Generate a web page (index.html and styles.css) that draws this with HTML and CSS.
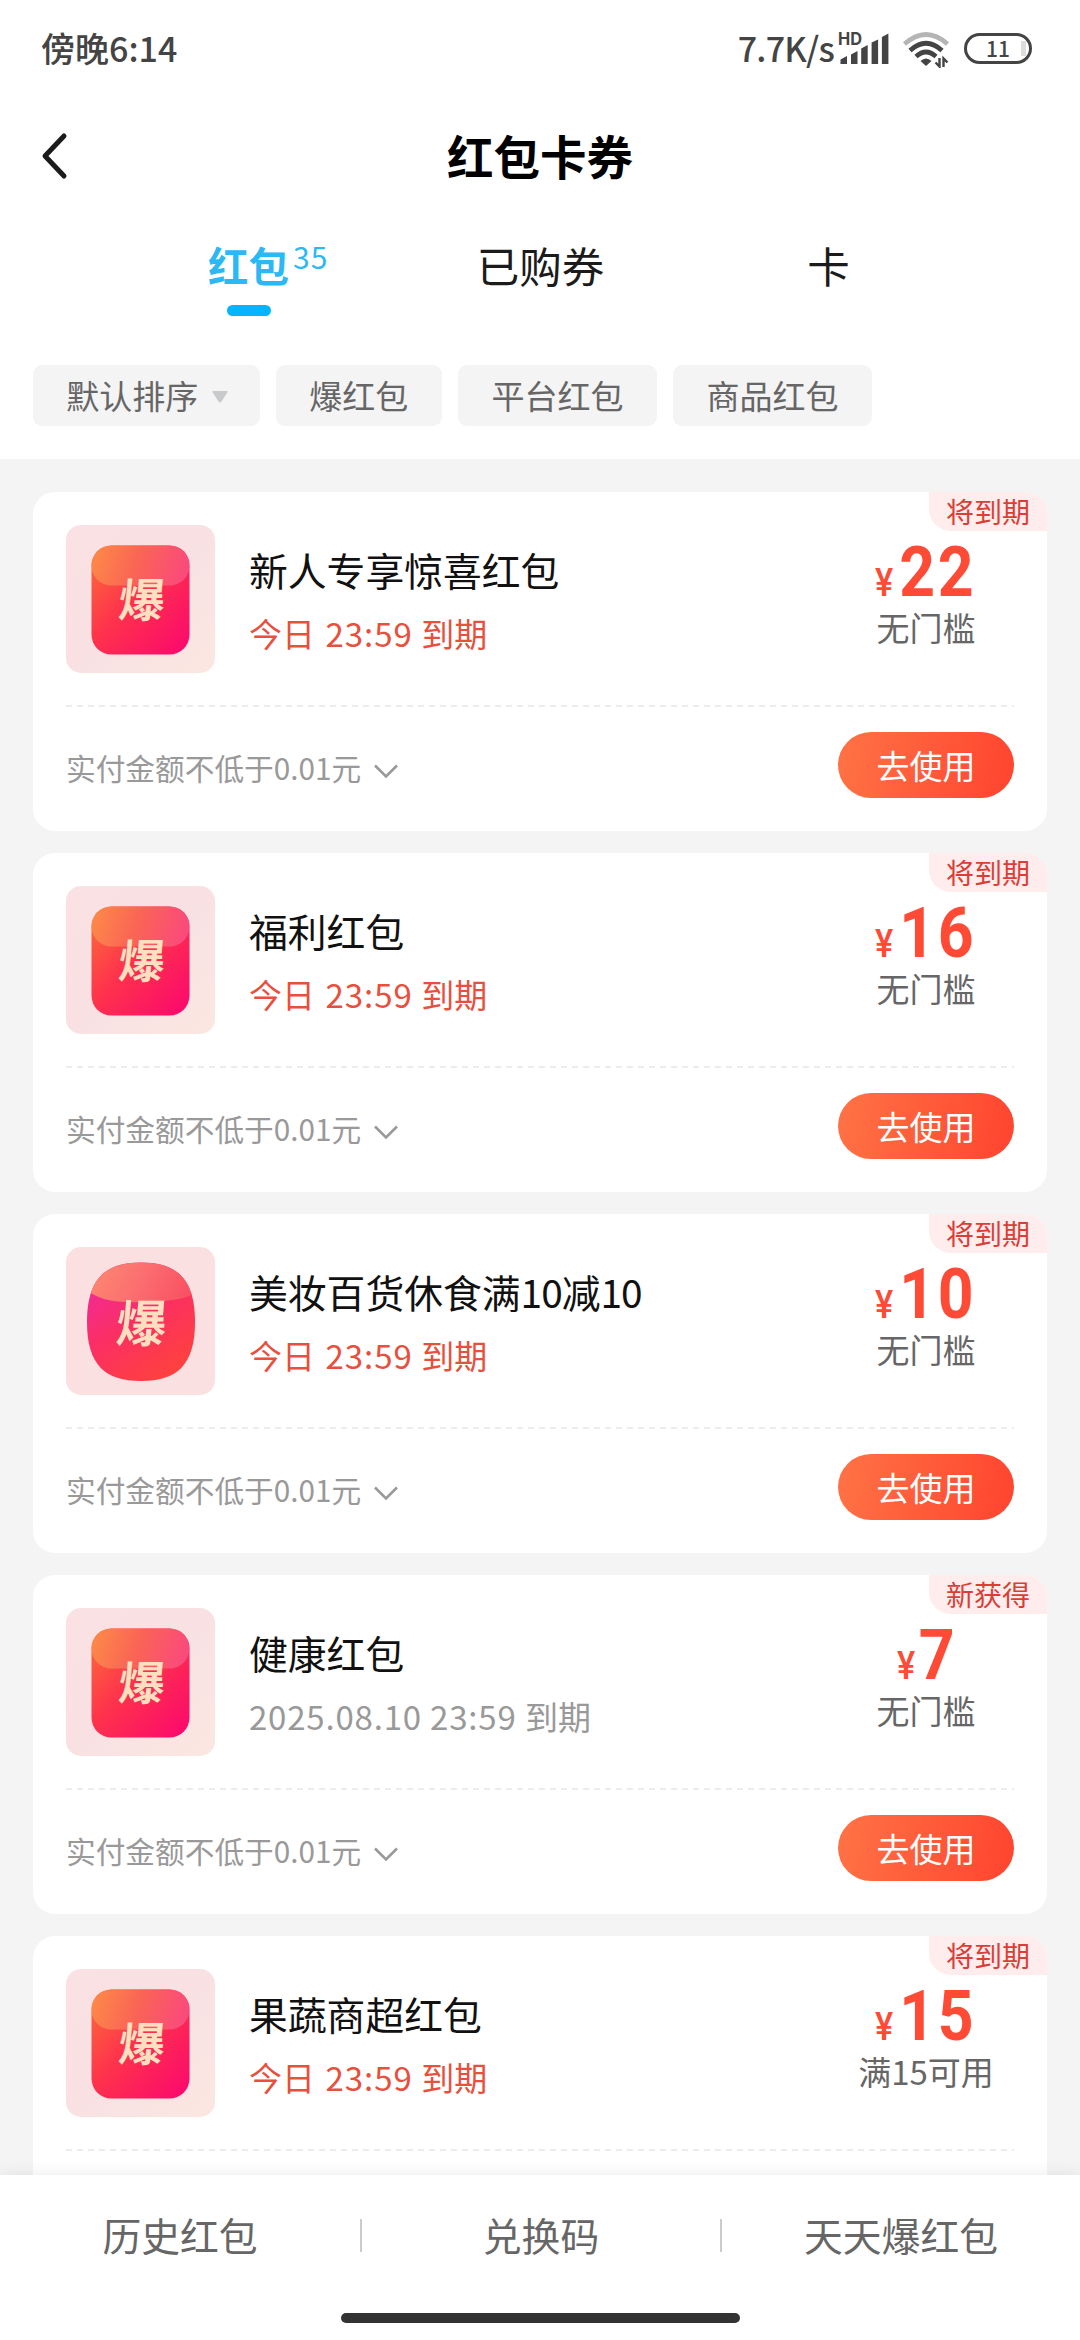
FILE: index.html
```html
<!DOCTYPE html>
<html lang="zh-CN">
<head>
<meta charset="utf-8">
<title>红包卡券</title>
<link rel="stylesheet" href="styles.css">
</head>
<body>
<svg width="0" height="0" class="defs">
  <defs>
    <linearGradient id="g-base" x1="0" y1="0.1" x2="0.9" y2="1"><stop offset="0" stop-color="#fc6a3c"/><stop offset="0.45" stop-color="#fe324c"/><stop offset="1" stop-color="#fb0a6c"/></linearGradient>
    <linearGradient id="g-gloss" x1="0" y1="0.4" x2="1" y2="0.6"><stop offset="0" stop-color="#fd8b48"/><stop offset="0.5" stop-color="#fa6455"/><stop offset="1" stop-color="#fa4a7c"/></linearGradient>
    <linearGradient id="g-back" x1="0" y1="0" x2="1" y2="1"><stop offset="0" stop-color="#f9e1e4"/><stop offset="0.5" stop-color="#f9e1e3"/><stop offset="1" stop-color="#fbe7e1"/></linearGradient>
    <linearGradient id="g-base2" x1="0.1" y1="0.2" x2="0.6" y2="1"><stop offset="0" stop-color="#f22b92"/><stop offset="0.45" stop-color="#fb2f63"/><stop offset="1" stop-color="#fe4040"/></linearGradient>
    <linearGradient id="g-gloss2" x1="0" y1="0.4" x2="1" y2="0.6"><stop offset="0" stop-color="#fd8a70"/><stop offset="0.5" stop-color="#fb6e70"/><stop offset="1" stop-color="#fa4f62"/></linearGradient>
    <clipPath id="c-sq"><rect x="25.5" y="20.5" width="98" height="109" rx="20"/></clipPath>
    <clipPath id="c-ro"><path id="blob" d="M75 15.500C111 15.500 129 32 129 75S111 134 75 134S21 118 21 75S39 15.500 75 15.500Z"/></clipPath>
    <symbol id="bao" viewBox="0 0 149 148">
      <rect width="149" height="148" rx="15" fill="url(#g-back)"/>
      <g clip-path="url(#c-sq)">
        <rect x="25" y="20" width="99" height="110" fill="url(#g-base)"/>
        <rect x="25.500" y="0" width="98" height="60.500" rx="20" fill="url(#g-gloss)"/>
      </g>
      <text class="glyph" transform="translate(51.500 91.500) skewX(-5)">爆</text>
    </symbol>
    <symbol id="bao-round" viewBox="0 0 149 148">
      <rect width="149" height="148" rx="15" fill="#fae0e1"/>
      <g clip-path="url(#c-ro)">
        <rect x="20" y="15" width="110" height="120" fill="url(#g-base2)"/>
        <path d="M20 10H130V46Q115 55 75 55Q35 57 20 42Z" fill="url(#g-gloss2)"/>
      </g>
      <text class="glyph glyph-lg" transform="translate(49 95) skewX(-5)">爆</text>
    </symbol>
    <symbol id="chev" viewBox="0 0 26 16"><path d="M2 2.500L13 13.500L24 2.500" fill="none" stroke="#999" stroke-width="2.600"/></symbol>
  </defs>
</svg>
<div class="screen">
  <header class="status">
    <div class="time">傍晚<span class="clock">6:14</span></div>
    <div class="indicators">
      <span class="speed">7.7K/s</span>
      <svg class="signal" width="53" height="36" viewBox="0 0 53 36">
        <text x="2" y="15" class="hd" textLength="24" lengthAdjust="spacingAndGlyphs">HD</text>
        <g fill="#444"><path d="M4.500 34V29.500L11 26V34Z"/><path d="M15 34V24.500L21.500 21V34Z"/><path d="M25.200 34V18.500L31.700 15V34Z"/><path d="M35.600 34V12.500L42.100 9.500V34Z"/><path d="M45.900 34V7L52.400 3.500V34Z"/></g>
      </svg>
      <svg class="wifi" width="48" height="38" viewBox="0 0 48 38">
        <g fill="none" stroke="#444" stroke-width="4.600"><path d="M2.500 14Q24 -5 45.500 14" stroke="#b5b5b5"/><path d="M8 20.500Q24 6 40 20.500"/><path d="M14 26.500Q24 17.500 34 26.500"/></g>
        <path d="M18.500 31Q24 26 29.500 31L24 36Z" fill="#444"/>
        <path d="M37.500 28V36.500L33.500 32.500M41.500 37V28.500L45.500 32.500" fill="none" stroke="#444" stroke-width="2.400"/>
      </svg>
      <div class="battery">11</div>
    </div>
  </header>
  <div class="titlebar">
    <svg class="back" width="30" height="50" viewBox="0 0 30 50"><path d="M25 5L6 25L25 45" fill="none" stroke="#1b1b1b" stroke-width="5" stroke-linecap="round" stroke-linejoin="round"/></svg>
    <h1>红包卡券</h1>
  </div>
  <nav class="tabs">
    <div class="tab active"><span>红包<sup>35</sup></span></div>
    <div class="tab"><span>已购券</span></div>
    <div class="tab"><span>卡</span></div>
  </nav>
  <div class="filters">
    <div class="chip">默认排序<svg class="tri" width="16" height="12" viewBox="0 0 16 12"><path d="M1.500 0H14.500Q16.500 0 15 2L9.500 10.500Q8 12.500 6.500 10.500L1 2Q-0.500 0 1.500 0Z" fill="#c6caca"/></svg></div>
    <div class="chip">爆红包</div>
    <div class="chip">平台红包</div>
    <div class="chip">商品红包</div>
  </div>
  <main class="list">
    <article class="card">
      <div class="tag">将到期</div>
      <div class="info">
        <svg class="thumb"><use href="#bao"/></svg>
        <div class="desc"><h2>新人专享惊喜红包</h2><p class="due">今日 <b>23:59</b> 到期</p></div>
        <div class="value"><div class="price"><i>¥</i><span>22</span></div><p>无门槛</p></div>
      </div>
      <div class="foot"><div class="terms">实付金额不低于0.01元<svg class="chev"><use href="#chev"/></svg></div><div class="use">去使用</div></div>
    </article>
    <article class="card">
      <div class="tag">将到期</div>
      <div class="info">
        <svg class="thumb"><use href="#bao"/></svg>
        <div class="desc"><h2>福利红包</h2><p class="due">今日 <b>23:59</b> 到期</p></div>
        <div class="value"><div class="price"><i>¥</i><span>16</span></div><p>无门槛</p></div>
      </div>
      <div class="foot"><div class="terms">实付金额不低于0.01元<svg class="chev"><use href="#chev"/></svg></div><div class="use">去使用</div></div>
    </article>
    <article class="card">
      <div class="tag">将到期</div>
      <div class="info">
        <svg class="thumb"><use href="#bao-round"/></svg>
        <div class="desc"><h2>美妆百货休食满<b>10</b>减<b>10</b></h2><p class="due">今日 <b>23:59</b> 到期</p></div>
        <div class="value"><div class="price"><i>¥</i><span>10</span></div><p>无门槛</p></div>
      </div>
      <div class="foot"><div class="terms">实付金额不低于0.01元<svg class="chev"><use href="#chev"/></svg></div><div class="use">去使用</div></div>
    </article>
    <article class="card">
      <div class="tag">新获得</div>
      <div class="info">
        <svg class="thumb"><use href="#bao"/></svg>
        <div class="desc"><h2>健康红包</h2><p class="due later"><b>2025.08.10 23:59</b> 到期</p></div>
        <div class="value"><div class="price"><i>¥</i><span>7</span></div><p>无门槛</p></div>
      </div>
      <div class="foot"><div class="terms">实付金额不低于0.01元<svg class="chev"><use href="#chev"/></svg></div><div class="use">去使用</div></div>
    </article>
    <article class="card">
      <div class="tag">将到期</div>
      <div class="info">
        <svg class="thumb"><use href="#bao"/></svg>
        <div class="desc"><h2>果蔬商超红包</h2><p class="due">今日 <b>23:59</b> 到期</p></div>
        <div class="value"><div class="price"><i>¥</i><span>15</span></div><p>满15可用</p></div>
      </div>
      <div class="foot"></div>
    </article>
  </main>
  <footer class="bottom">
    <div class="links"><a>历史红包</a><a>兑换码</a><a>天天爆红包</a></div>
    <div class="home"></div>
  </footer>
</div>
</body>
</html>
```
FILE: styles.css
```css
* { box-sizing: border-box; margin: 0; padding: 0; }
body { width: 1080px; height: 2340px; overflow: hidden; background: #fff; font-family: "Noto Sans CJK SC", sans-serif; }
.defs { position: absolute; }
.screen { display: flex; flex-direction: column; height: 2340px; }

.status { display: flex; justify-content: space-between; height: 96px; padding: 28px 48px 0 41px; color: #444; font-size: 34px; font-weight: 500; line-height: 40px; }
.time { display: flex; }
.clock { letter-spacing: 0; }
.indicators { display: flex; align-items: flex-start; }
.speed { letter-spacing: -0.8px; margin-right: 2px; }
.signal { margin-top: 2px; }
.hd { font: 700 17px Inter, sans-serif; fill: #444; }
.wifi { margin: 2px 0 0 13px; }
.battery { width: 68px; height: 31px; margin: 5px 0 0 14px; border: 3px solid #444; border-radius: 16px; font-size: 21px; line-height: 24px; text-align: center; background: linear-gradient(#ddd, #ddd) 54px 5px / 5px 15px no-repeat; }

.titlebar { position: relative; height: 120px; }
.back { display: block; position: absolute; left: 39px; top: 35px; }
h1 { font-size: 46.500px; line-height: 118px; font-weight: 700; text-align: center; color: #000; }

.tabs { display: grid; grid-template-columns: 288px 296px 280px; justify-content: center; height: 149px; padding-right: 7px; text-align: center; font-size: 42.500px; line-height: 98px; color: #1b1b1b; }
.tab span { position: relative; display: inline-block; }
.active { font-size: 40.500px; font-weight: 700; color: #2cb8f3; }
.active sup { position: absolute; left: 85px; top: -9px; font-size: 30px; font-weight: 400; line-height: 98px; letter-spacing: 1px; }
.active::after { content: ""; display: block; width: 44px; height: 11px; margin: -9px auto 0; border-radius: 6px; background: #06b4fd; }

.filters { display: flex; gap: 16.500px; height: 94px; padding-left: 33px; }
.chip { display: flex; align-items: center; height: 61px; padding: 0 33.300px; border-radius: 9px; background: #f4f4f4; color: #666; font-size: 33px; line-height: 57px; white-space: nowrap; }
.chip .tri { margin-top: 2px; }
.chip:nth-child(1) { width: 226.500px; padding-right: 0; }
.tri { flex: none; margin-left: 14px; }

.list { flex: 1; height: 1716px; overflow: hidden; padding: 33px 33px 0; display: flex; flex-direction: column; gap: 22px; background: #f4f4f4; }
.card { position: relative; flex: none; height: 339px; padding: 0 33px; border-radius: 22px; background: #fff; }
.tag { position: absolute; right: 0; top: 0; width: 118px; height: 39px; border-radius: 0 22px 0 22px; background: #ffecec; color: #dc3d36; font-size: 28px; line-height: 38px; padding-left: 17px; white-space: nowrap; }
.info { display: flex; height: 215px; padding-top: 33px; background: repeating-linear-gradient(90deg, #ececec 0 6px, transparent 6px 11px) 0 100% / 100% 2px no-repeat; }
.thumb { flex: none; width: 149px; height: 148px; }
.glyph { font: 700 46px "Noto Sans CJK SC", sans-serif; fill: #fee0c0; }
.glyph-lg { font-size: 50px; }
.desc { flex: 1; padding: 15px 0 0 34px; }
h2 { font-size: 38.800px; line-height: 58px; font-weight: 400; color: #111; white-space: nowrap; }
h2 b { font-weight: 400; letter-spacing: -1px; }
.due { margin-top: 10px; font-size: 33px; line-height: 50px; color: #e84f3c; white-space: nowrap; }
.due b { font-weight: 400; letter-spacing: 1px; margin: 0 1px 0 3px; }
.due.later { color: #999; }
.due.later b { margin-left: 0; letter-spacing: 0.8px; }
.value { width: 176px; text-align: center; }
.price { display: flex; justify-content: center; align-items: baseline; height: 80px; padding-left: 4px; font-family: Roboto, sans-serif; font-weight: 700; line-height: 93px; color: #ff4a35; }
.price i { font-style: normal; font-weight: 500; font-size: 38px; transform: scaleX(0.9); }
.price span { font-size: 71px; letter-spacing: 3px; transform: scaleX(0.88); }
.value p { position: relative; font-size: 33px; line-height: 44px; color: #666; white-space: nowrap; }
.foot { display: flex; justify-content: space-between; }
.terms { padding-top: 40px; font-size: 29.700px; line-height: 42px; color: #999; }
.chev { width: 26px; height: 16px; margin-left: 12px; vertical-align: 1px; }
.use { width: 176px; height: 66px; margin-top: 25px; border-radius: 33px; background: linear-gradient(100deg, #ff7345, #ff4630 95%); color: #fff; font-size: 33px; line-height: 66px; text-align: center; }

.bottom { position: relative; height: 165px; background: #fff; box-shadow: 0 -2px 14px rgba(0, 0, 0, 0.07); }
.links { display: grid; grid-template-columns: repeat(3, 360px); text-align: center; padding-top: 44px; height: 138px; font-size: 38.800px; line-height: 31px; color: #666; }
.links a { height: 33px; }
.links a + a { border-left: 2px solid #ccc; }
.home { width: 399px; height: 10px; margin: 0 auto; border-radius: 5px; background: #333; }
```
